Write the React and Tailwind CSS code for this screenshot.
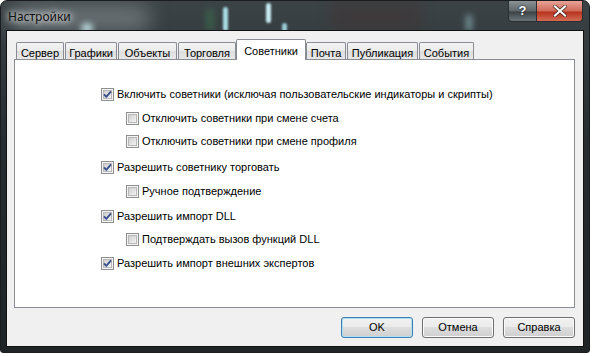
import React from "react";

const font = "font-['Liberation_Sans',Arial,sans-serif]";

const tabs = [
  { label: "Сервер", w: "w-[48px]" },
  { label: "Графики", w: "w-[52px]" },
  { label: "Объекты", w: "w-[59px]" },
  { label: "Торговля", w: "w-[58px]" },
  { label: "Советники", w: "w-[70px]", active: true },
  { label: "Почта", w: "w-[40px]" },
  { label: "Публикация", w: "w-[71px]" },
  { label: "События", w: "w-[55px]" },
];

const options = [
  { label: "Включить советники (исключая пользовательские индикаторы и скрипты)", checked: true, mt: "mt-[28px]" },
  { label: "Отключить советники при смене счета", sub: true, mt: "mt-[11px]" },
  { label: "Отключить советники при смене профиля", sub: true, mt: "mt-[10px]" },
  { label: "Разрешить советнику торговать", checked: true, mt: "mt-[13px]" },
  { label: "Ручное подтверждение", sub: true, mt: "mt-[11px]" },
  { label: "Разрешить импорт DLL", checked: true, mt: "mt-[12px]" },
  { label: "Подтверждать вызов функций DLL", sub: true, mt: "mt-[10px]" },
  { label: "Разрешить импорт внешних экспертов", checked: true, mt: "mt-[11px]" },
];

function CheckBox({ checked }) {
  return (
    <svg width="13" height="13" viewBox="0 0 13 13" className="shrink-0">
      <defs>
        <linearGradient id="cbIn" x1="0" y1="0" x2="1" y2="1">
          <stop offset="0" stopColor="#cbcbcb" />
          <stop offset="1" stopColor="#f7f7f7" />
        </linearGradient>
      </defs>
      <rect x="0.5" y="0.5" width="12" height="12" fill="#f4f4f4" stroke="#8e8f8f" />
      <rect x="2.5" y="2.5" width="8" height="8" fill="url(#cbIn)" stroke="#b8b8b8" />
      {checked && (
        <path d="M3 6.3 L5.3 8.8 L10 3.3" fill="none" stroke="#3a4f8c" strokeWidth="1.9" strokeLinejoin="round" />
      )}
    </svg>
  );
}

function Button({ children, primary }) {
  return (
    <button
      className={`h-[21px] rounded-[3px] border text-[11px] text-black bg-[linear-gradient(#f2f2f2,#ebebeb_45%,#dddddd_50%,#cfcfcf)] ${
        primary ? "w-[72px] border-[#3c7fb1] shadow-[inset_0_0_0_1px_#aee0f8]" : "w-[72px] border-[#707070] shadow-[inset_0_0_0_1px_#fafafa]"
      }`}
    >
      {children}
    </button>
  );
}

export default function App() {
  return (
    <div className={`w-[593px] h-[356px] bg-white overflow-hidden ${font}`}>
      <div className="relative w-[590px] h-[353px] rounded-t-[7px] rounded-b-[3px] border border-[#1a1d1f] bg-[linear-gradient(180deg,#3b4346_0%,#262c2f_40%,#1f2427_100%)] flex flex-col overflow-hidden">
        {/* glass glow */}
        <div className="absolute left-[10px] top-[4px] w-[140px] h-[26px] rounded-full bg-[#8d9699] opacity-60 blur-[10px]" />
        <div className="absolute left-[80px] top-[22px] w-[12px] h-[10px] rounded-full bg-[#b9d7dc] blur-[3px]" />
        <div className="absolute left-[222px] top-[6px] w-[5px] h-[24px] rounded-sm bg-[#a9dbe6] blur-[1px]" />
        <div className="absolute left-[265px] top-[2px] w-[5px] h-[20px] rounded-sm bg-[#c9ecf2] blur-[1px]" />
        <div className="absolute left-[281px] top-[22px] w-[5px] h-[9px] rounded-sm bg-[#9bcfd8] blur-[1px]" />
        <div className="absolute left-[205px] top-[8px] w-[8px] h-[22px] bg-[#3b7a52] opacity-50 blur-[3px]" />
        <div className="absolute left-[465px] top-[14px] w-[6px] h-[16px] bg-[#9ccbd2] opacity-60 blur-[3px]" />
        <div className="absolute left-[330px] top-[0px] w-[90px] h-[30px] bg-[#4a2a2a] opacity-30 blur-[8px]" />

        {/* title bar */}
        <div className="relative h-[29px] flex items-start">
          <div className="pl-[7px] pt-[9px] text-[12px] leading-[14px] text-[#111] font-['Noto_Sans',sans-serif] [text-shadow:0_0_6px_#fff,0_0_10px_#fff]">
            Настройки
          </div>
          <div className="ml-auto mr-[6px] flex">
            <div className="w-[29px] h-[21px] rounded-bl-[4px] border border-[#2a2e31] border-t-0 bg-[linear-gradient(#8a9296,#5e666a_50%,#3c4347_55%,#6b7579)] flex items-center justify-center text-white font-bold text-[13px] [text-shadow:0_0_2px_#000]">
              ?
            </div>
            <div className="w-[46px] h-[21px] rounded-br-[4px] border border-l-0 border-[#2a2e31] border-t-0 bg-[linear-gradient(#e8a397,#cf6a58_50%,#b8321e_55%,#d36c55)] flex items-center justify-center">
              <svg width="14" height="12" viewBox="0 0 14 12">
                <path d="M2 1.5 L12 10.5 M12 1.5 L2 10.5" stroke="#3a1c16" strokeWidth="3.6" strokeLinecap="square" />
                <path d="M2 1.5 L12 10.5 M12 1.5 L2 10.5" stroke="#fff" strokeWidth="2.2" strokeLinecap="square" />
              </svg>
            </div>
          </div>
        </div>

        {/* client area */}
        <div className="relative mx-[5px] h-[317px] border border-[#0f1112] bg-[#f0f0f0] flex flex-col pt-[8px] pl-[7px] pr-[8px]">
          <div className="flex items-end h-[20px] pl-[2px] gap-[1px]">
            {tabs.map((t) =>
              t.active ? (
                <div
                  key={t.label}
                  className={`${t.w} relative z-10 -mx-[1px] h-[21px] -mb-[1px] rounded-t-[2px] border border-b-0 border-[#898c95] bg-white text-[11px] text-black flex justify-center pt-[3px]`}
                >
                  {t.label}
                </div>
              ) : (
                <div
                  key={t.label}
                  className={`${t.w} h-[17px] rounded-t-[2px] border border-b-0 border-[#898c95] bg-[linear-gradient(#f3f3f3,#ebebeb_50%,#dedede_50%,#e7e7e7)] text-[11px] text-black flex justify-center pt-[2px]`}
                >
                  {t.label}
                </div>
              )
            )}
          </div>
          <div className="h-[249px] border border-[#898c95] bg-white flex flex-col pl-[86px]">
            {options.map((o) => (
              <div key={o.label} className={`${o.mt} flex items-center h-[13px] ${o.sub ? "pl-[25px]" : ""}`}>
                <CheckBox checked={o.checked} />
                <span className="ml-[3px] text-[11px] leading-[13px] text-black whitespace-nowrap">{o.label}</span>
              </div>
            ))}
          </div>
          <div className="flex justify-end gap-[9px] mt-[9px]">
            <Button primary>OK</Button>
            <Button>Отмена</Button>
            <Button>Справка</Button>
          </div>
        </div>
      </div>
    </div>
  );
}
